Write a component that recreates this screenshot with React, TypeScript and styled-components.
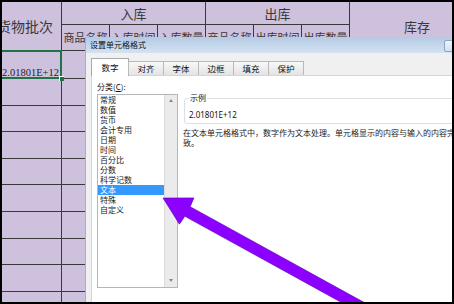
import styled, { createGlobalStyle } from "styled-components";

const GlobalStyle = createGlobalStyle`
  html, body {
    margin: 0;
    padding: 0;
    background: #000;
  }
  body {
    width: 454px;
    height: 304px;
    overflow: hidden;
    font-family: "Noto Sans CJK SC", "Noto Sans", sans-serif;
  }
`;

const Frame = styled.div`
  width: 454px;
  height: 304px;
  box-sizing: border-box;
  padding: 2px;
  background: #000;
`;

const Screen = styled.div`
  position: relative;
  width: 450px;
  height: 300px;
  overflow: hidden;
  background: #cec1dd;
`;

const Sheet = styled.div`
  display: grid;
  grid-template-columns: 72px repeat(6, 47px) 134px;
  grid-template-rows: 22px 25px 27px 26px 25px 26px 25px 26px 26px 25px 26px 26px;
  gap: 1px;
  width: max-content;
  margin-left: -13px;
  background: #3a3a3a;
`;

const Cell = styled.div<{ $col?: string; $row?: string; $size?: number }>`
  grid-column: ${(p) => p.$col ?? "auto"};
  grid-row: ${(p) => p.$row ?? "auto"};
  background: #cec1dd;
  display: flex;
  align-items: center;
  justify-content: center;
  overflow: hidden;
  white-space: nowrap;
  color: #383838;
  font-size: ${(p) => p.$size ?? 13}px;
  line-height: 1;
`;

const ValueCell = styled.div<{ $selected?: boolean }>`
  position: relative;
  background: #cec1dd;
  display: flex;
  align-items: flex-end;
  justify-content: flex-end;
  padding-right: 2px;
  font-family: "Liberation Serif", serif;
  font-size: 10.5px;
  line-height: 10px;
  color: #222;
  white-space: nowrap;
  ${(p) =>
    p.$selected &&
    `
    z-index: 1;
    outline: 2px solid #217346;
    outline-offset: -1px;
    &::after {
      content: "";
      position: absolute;
      right: -3px;
      bottom: -3px;
      width: 4px;
      height: 4px;
      background: #217346;
      border: 1px solid #fff;
      border-width: 1px 0 0 1px;
    }
  `}
`;

const Dialog = styled.div`
  position: absolute;
  left: 83px;
  top: 35px;
  width: 385px;
  height: 280px;
  display: flex;
  flex-direction: column;
  border-left: 1px solid #9db3cc;
  background: #f0f0f0;
  z-index: 2;
`;

const TitleBar = styled.div`
  height: 16px;
  display: flex;
  align-items: flex-start;
  justify-content: space-between;
  background: linear-gradient(#b3cae4, #d4e2f2);
  padding-left: 4px;
`;

const Title = styled.span`
  font-size: 8px;
  line-height: 16px;
  color: #111;
`;

const HelpButton = styled.div`
  width: 22px;
  height: 12px;
  box-sizing: border-box;
  margin: 3px 5px 0 0;
  border: 1px solid #8da5c3;
  border-radius: 2px;
  background: linear-gradient(#eef3fa, #d3e0ef);
  font-size: 8px;
  line-height: 10px;
  text-align: center;
  color: #333;
`;

const Body = styled.div`
  flex: 1;
  display: flex;
  flex-direction: column;
  padding: 5px 0 0 5px;
`;

const TabRow = styled.div`
  height: 17px;
  display: flex;
  align-items: flex-end;
  position: relative;
  z-index: 1;
`;

const Tab = styled.div<{ $active?: boolean }>`
  box-sizing: border-box;
  width: ${(p) => (p.$active ? 38 : 36)}px;
  height: ${(p) => (p.$active ? 18 : 14)}px;
  margin-bottom: ${(p) => (p.$active ? -1 : 0)}px;
  margin-left: ${(p) => (p.$active ? 0 : -1)}px;
  border: 1px solid ${(p) => (p.$active ? "#a9a9a9" : "#b9b9b9")};
  border-bottom: none;
  background: ${(p) => (p.$active ? "#fff" : "linear-gradient(#f7f7f7, #e4e4e4)")};
  font-size: 8.5px;
  line-height: ${(p) => (p.$active ? 16 : 13)}px;
  text-align: center;
  color: #111;
  &:first-child {
    margin-left: 0;
  }
`;

const Panel = styled.div`
  flex: 1;
  display: flex;
  background: #fff;
  border: 1px solid #d5d5d5;
  border-right: none;
  padding: 6px 0 0 5px;
`;

const LeftCol = styled.div`
  width: 82px;
  display: flex;
  flex-direction: column;
`;

const Label = styled.div`
  height: 10px;
  margin-bottom: 2px;
  font-size: 8px;
  line-height: 10px;
  color: #111;
`;

const ListBox = styled.div`
  height: 194px;
  box-sizing: border-box;
  display: flex;
  border: 1px solid #b4b6bb;
`;

const Items = styled.div`
  flex: 1;
  display: flex;
  flex-direction: column;
`;

const Item = styled.div<{ $selected?: boolean }>`
  height: 10px;
  padding-left: 2px;
  font-size: 8px;
  line-height: 10px;
  color: ${(p) => (p.$selected ? "#fff" : "#1a1a1a")};
  background: ${(p) => (p.$selected ? "#3399ff" : "transparent")};
`;

const ScrollBar = styled.div`
  width: 12px;
  display: flex;
  flex-direction: column;
  align-items: center;
  justify-content: space-between;
  padding: 4px 0 5px;
  background: #ebebeb;
  border-left: 1px solid #dcdcdc;
`;

const ScrollArrow = styled.div<{ $down?: boolean }>`
  width: 0;
  height: 0;
  border-left: 2.5px solid transparent;
  border-right: 2.5px solid transparent;
  ${(p) =>
    p.$down ? "border-top: 3px solid #8a8a8a;" : "border-bottom: 3px solid #8a8a8a;"}
`;

const RightCol = styled.div`
  flex: 1;
  margin-left: 5px;
  display: flex;
  flex-direction: column;
`;

const Sample = styled.fieldset`
  margin: 11px 0 0 1px;
  padding: 7px 4px 3px 4px;
  border: 1px solid #dcdfe3;
  border-radius: 3px;
  min-width: 0;
`;

const SampleLegend = styled.legend`
  padding: 0 1px;
  font-size: 8px;
  line-height: 10px;
  color: #111;
`;

const SampleValue = styled.div`
  font-family: "Noto Sans", sans-serif;
  font-size: 8px;
  line-height: 10px;
  color: #111;
`;

const Description = styled.div`
  margin-top: 4px;
  font-size: 8px;
  line-height: 10px;
  color: #1a1a1a;
  white-space: nowrap;
`;

const Overlay = styled.svg`
  position: absolute;
  left: -2px;
  top: -2px;
  width: 454px;
  height: 304px;
  z-index: 5;
  pointer-events: none;
`;

const subHeads = ["商品名称", "入库时间", "入库数量", "商品名称", "出库时间", "出库数量"];
const rowCount = 10;
const categories = [
  "常规",
  "数值",
  "货币",
  "会计专用",
  "日期",
  "时间",
  "百分比",
  "分数",
  "科学记数",
  "文本",
  "特殊",
  "自定义",
];
const tabs = ["数字", "对齐", "字体", "边框", "填充", "保护"];

export default function App() {
  return (
    <Frame>
      <GlobalStyle />
      <Screen>
        <Sheet>
          <Cell $col="1" $row="1 / span 2" $size={14}>
            货物批次
          </Cell>
          <Cell $col="2 / span 3" $row="1">
            入库
          </Cell>
          <Cell $col="5 / span 3" $row="1">
            出库
          </Cell>
          <Cell $col="8" $row="1 / span 2">
            库存
          </Cell>
          {subHeads.map((h, i) => (
            <Cell key={i} $size={11}>
              {h}
            </Cell>
          ))}
          {Array.from({ length: rowCount * 8 }).map((_, i) => (
            <ValueCell key={i} $selected={i === 0}>
              {i === 0 ? "2.01801E+12" : ""}
            </ValueCell>
          ))}
        </Sheet>

        <Dialog>
          <TitleBar>
            <Title>设置单元格格式</Title>
            <HelpButton>?</HelpButton>
          </TitleBar>
          <Body>
            <TabRow>
              {tabs.map((t, i) => (
                <Tab key={t} $active={i === 0}>
                  {t}
                </Tab>
              ))}
            </TabRow>
            <Panel>
              <LeftCol>
                <Label>
                  分类(<u>C</u>):
                </Label>
                <ListBox>
                  <Items>
                    {categories.map((c) => (
                      <Item key={c} $selected={c === "文本"}>
                        {c}
                      </Item>
                    ))}
                  </Items>
                  <ScrollBar>
                    <ScrollArrow />
                    <ScrollArrow $down />
                  </ScrollBar>
                </ListBox>
              </LeftCol>
              <RightCol>
                <Sample>
                  <SampleLegend>示例</SampleLegend>
                  <SampleValue>2.01801E+12</SampleValue>
                </Sample>
                <Description>
                  在文本单元格格式中，数字作为文本处理。单元格显示的内容与输入的内容完全一
                </Description>
                <Description style={{ marginTop: 0 }}>致。</Description>
              </RightCol>
            </Panel>
          </Body>
        </Dialog>

        <Overlay viewBox="0 0 454 304">
          <polygon
            points="163,198 193.9,197.9 190.2,206.7 375.9,308.9 370.6,318.5 184.9,216.3 179.4,224.2"
            fill="#8c00ff"
            stroke="#5e00a8"
            strokeWidth="0.6"
            strokeLinejoin="miter"
          />
        </Overlay>
      </Screen>
    </Frame>
  );
}
